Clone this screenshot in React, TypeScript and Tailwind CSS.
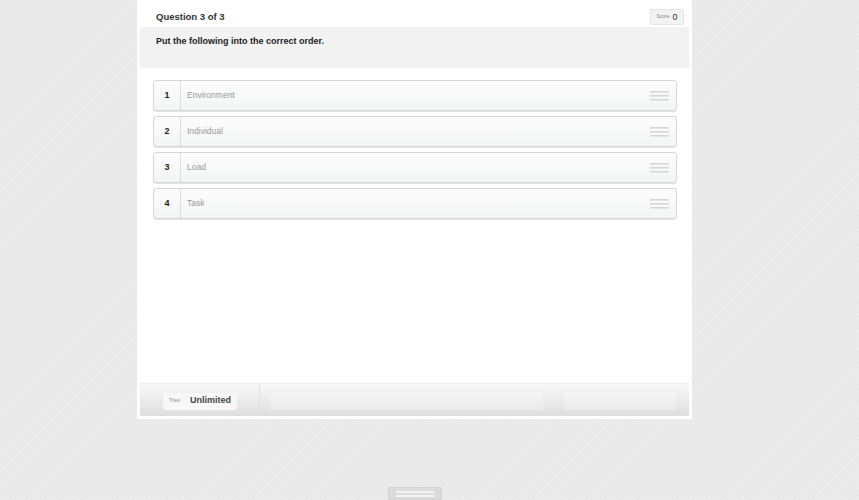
const items = ['Environment', 'Individual', 'Load', 'Task']

function Grip() {
  return (
    <div className="flex flex-col gap-[2px] w-[19px]">
      <span className="h-[2px] bg-[#e4e4e4] border-t border-[#d6d6d6]" />
      <span className="h-[2px] bg-[#e4e4e4] border-t border-[#d6d6d6]" />
      <span className="h-[2px] bg-[#e4e4e4] border-t border-[#d6d6d6]" />
    </div>
  )
}

export default function App() {
  return (
    <div
      className="h-[500px] w-[859px] overflow-hidden bg-[#ebebeb] bg-[repeating-linear-gradient(135deg,#ededed_0px,#ededed_1.5px,#e7e7e7_1.5px,#e7e7e7_3px)] pl-[137px] flex flex-col"
      style={{ fontFamily: '"Liberation Sans", Arial, sans-serif' }}
    >
      <div className="w-[555px] h-[419px] bg-white p-[3px] flex flex-col">
        <div className="h-[24px] flex items-start justify-between pl-[16px] pr-[5px]">
          <span className="text-[9.5px] text-[#333] font-bold mt-[7px]">Question 3 of 3</span>
          <div className="mt-[6px] h-[16px] w-[34px] flex items-center justify-center gap-[3px] bg-[#f3f3f3] border border-[#e3e3e3] rounded-[2px]">
            <span className="text-[5px] text-[#888]">Score</span>
            <span className="text-[9px] text-[#333] leading-none">0</span>
          </div>
        </div>
        <div className="h-[41px] bg-[#f2f2f2] pl-[16px] pt-[8px]">
          <p className="text-[9px] font-bold text-[#222]">Put the following into the correct order.</p>
        </div>
        <div className="flex-1 flex flex-col gap-[5px] pt-[12px] pl-[13px] pr-[12px]">
          {items.map((t, i) => (
            <div
              key={t}
              className="h-[31px] flex items-stretch border border-[#d6d6d6] rounded-[3px] bg-[linear-gradient(to_bottom,#fdfdfd,#f3f4f4)] shadow-[0_1px_0_#e6e6e6]"
            >
              <div className="w-[27px] border-r border-[#dcdcdc] flex items-center justify-center text-[9px] font-bold text-[#222]">
                {i + 1}
              </div>
              <div className="flex-1 flex items-center pl-[6px] text-[8.5px] text-[#999]">{t}</div>
              <div className="flex items-center pr-[7px]">
                <Grip />
              </div>
            </div>
          ))}
        </div>
        <div className="h-[33px] flex items-center bg-[linear-gradient(to_bottom,#f8f8f8,#dedede)] border-t border-[#ececec]">
          <div className="w-[120px] h-full flex items-center pl-[23px] border-r border-[#e2e2e2]">
            <div className="mt-[2px] h-[17px] w-[74px] bg-[#f7f7f7] rounded-[2px] flex items-center gap-[10px] pl-[6px]">
              <span className="text-[5px] text-[#888]">Tries</span>
              <span className="text-[9px] font-bold text-[#444]">Unlimited</span>
            </div>
          </div>
          <div className="ml-[10px] h-[20px] w-[274px] rounded-[2px] border border-[#ebebeb] bg-[linear-gradient(to_bottom,#f6f6f6,#ebebeb)]" />
          <div className="ml-[19px] h-[20px] w-[114px] rounded-[2px] border border-[#ebebeb] bg-[linear-gradient(to_bottom,#f6f6f6,#ebebeb)]" />
        </div>
      </div>
      <div className="mt-[68px] ml-[251px] w-[54px] h-[13px] bg-[#dcdcdc] border border-[#d2d2d2] rounded-t-[2px] flex flex-col items-center gap-[2px] pt-[3px]">
        <span className="w-[38px] h-[2px] bg-[#f5f5f5]" />
        <span className="w-[38px] h-[2px] bg-[#f5f5f5]" />
      </div>
    </div>
  )
}
